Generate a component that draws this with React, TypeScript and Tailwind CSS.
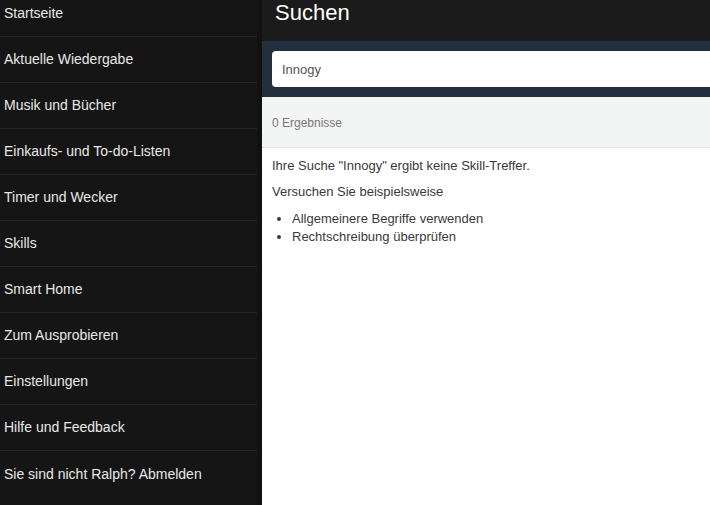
const navItems = [
  "Startseite",
  "Aktuelle Wiedergabe",
  "Musik und Bücher",
  "Einkaufs- und To-do-Listen",
  "Timer und Wecker",
  "Skills",
  "Smart Home",
  "Zum Ausprobieren",
  "Einstellungen",
  "Hilfe und Feedback",
  "Sie sind nicht Ralph? Abmelden",
];

export default function App() {
  return (
    <div className="flex h-[505px] w-[710px] overflow-hidden bg-white font-['Liberation_Sans',Arial,sans-serif]">
      {/* side nav */}
      <aside className="flex w-[262px] shrink-0 bg-[#111111]">
        <nav className="w-[257px] bg-[#151515]">
          <ul className="-mt-[9px]">
            {navItems.map((item) => (
              <li
                key={item}
                className="flex h-[46px] items-center border-b border-[#262626] pl-[4px] text-[14px] text-[#e8e8e8] last:border-b-0"
              >
                {item}
              </li>
            ))}
          </ul>
        </nav>
      </aside>

      <main className="flex min-w-0 flex-1 flex-col">
        <header className="flex h-[41px] items-start bg-[#1b1b1b] pl-[13px]">
          <h1 className="text-[22px] leading-[26px] text-white">Suchen</h1>
        </header>

        <div className="bg-[#232f3e] py-[10px] pl-[10px]">
          <input
            readOnly
            value="Innogy"
            className="h-[36px] w-[460px] rounded-[4px] bg-white px-[10px] text-[13px] text-[#555] outline-none"
          />
        </div>

        <div className="flex h-[51px] items-center border-b border-[#e3e3e3] bg-[#f3f4f4] pl-[10px] pt-[2px] text-[12px] text-[#777]">
          0 Ergebnisse
        </div>

        <section className="px-[10px] pt-[9px] text-[13px] leading-[18px] text-[#3a3a3a]">
          <p>Ihre Suche "Innogy" ergibt keine Skill-Treffer.</p>
          <p className="mt-[8px]">Versuchen Sie beispielsweise</p>
          <ul className="mt-[9px] list-disc pl-[20px]">
            <li>Allgemeinere Begriffe verwenden</li>
            <li>Rechtschreibung überprüfen</li>
          </ul>
        </section>
      </main>
    </div>
  );
}
